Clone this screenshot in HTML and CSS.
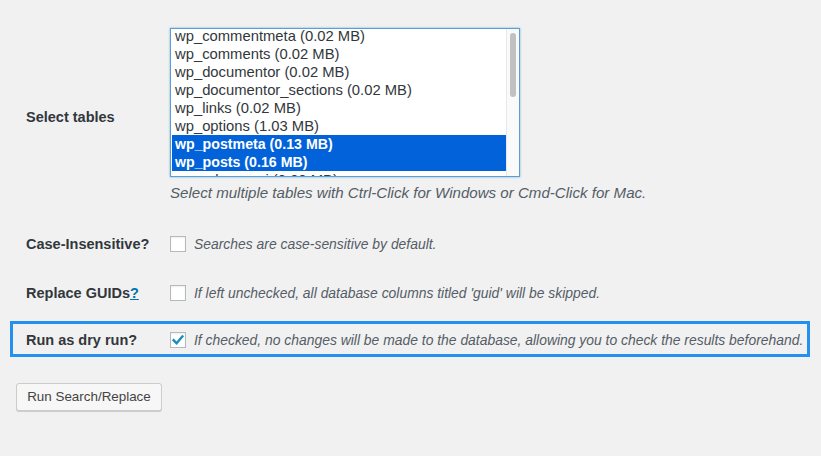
FILE: index.html
```html
<!DOCTYPE html>
<html>
<head>
<meta charset="utf-8">
<link rel="stylesheet" href="styles.css">
</head>
<body>
<div class="form">
  <div class="row row-tables">
    <div class="label">Select tables</div>
    <div class="field">
      <div class="listbox">
        <div class="options">
          <div class="opt">wp_commentmeta (0.02 MB)</div>
          <div class="opt">wp_comments (0.02 MB)</div>
          <div class="opt">wp_documentor (0.02 MB)</div>
          <div class="opt">wp_documentor_sections (0.02 MB)</div>
          <div class="opt">wp_links (0.02 MB)</div>
          <div class="opt">wp_options (1.03 MB)</div>
          <div class="opt sel">wp_postmeta (0.13 MB)</div>
          <div class="opt sel">wp_posts (0.16 MB)</div>
          <div class="opt">wp_relevanssi (0.00 MB)</div>
        </div>
        <div class="scrolltrack"><div class="thumb"></div></div>
      </div>
      <p class="desc desc-tables">Select multiple tables with Ctrl-Click for Windows or Cmd-Click for Mac.</p>
    </div>
  </div>

  <div class="row row-case">
    <div class="label">Case-Insensitive?</div>
    <div class="field check-field">
      <span class="checkbox"></span>
      <span class="desc">Searches are case-sensitive by default.</span>
    </div>
  </div>

  <div class="row row-guid">
    <div class="label">Replace GUIDs<a class="help" href="#">?</a></div>
    <div class="field check-field">
      <span class="checkbox"></span>
      <span class="desc">If left unchecked, all database columns titled 'guid' will be skipped.</span>
    </div>
  </div>

  <div class="row row-dry">
    <div class="label">Run as dry run?</div>
    <div class="field check-field">
      <span class="checkbox checked"><svg width="16" height="16" viewBox="0 0 16 16"><path d="M3.6 8.2 L6.6 11.3 L12.4 4.4" fill="none" stroke="#1e8cbe" stroke-width="2.4" stroke-linecap="square" stroke-linejoin="miter"/></svg></span>
      <span class="desc">If checked, no changes will be made to the database, allowing you to check the results beforehand.</span>
    </div>
  </div>

  <div class="actions">
    <button class="button">Run Search/Replace</button>
  </div>
</div>
</body>
</html>
```

FILE: styles.css
```css
html, body {
  margin: 0;
  padding: 0;
  background: #f1f1f1;
}
body {
  font-family: "Liberation Sans", Arial, sans-serif;
  color: #23282d;
  width: 821px;
  height: 456px;
  overflow: hidden;
}
.form {
  padding: 0 11px 0 10px;
}
.row {
  display: flex;
  align-items: center;
  padding-left: 16px;
}
.label {
  width: 144px;
  flex: none;
  font-weight: bold;
  font-size: 14.5px;
  color: #32373c;
}
.help {
  color: #0073aa;
  text-decoration: underline;
}
.row-tables {
  padding-top: 28px;
  padding-bottom: 15px;
}
.row-tables .label {
  padding-top: 3px;
}
.listbox {
  width: 350px;
  height: 149px;
  box-sizing: border-box;
  border: 1px solid #5b9dd9;
  box-shadow: 0 0 2px rgba(30, 140, 190, 0.6);
  background: #fff;
  display: flex;
  overflow: hidden;
}
.options {
  flex: 1;
  padding: 0 0 0 1px;
  margin-top: -2px;
}
.opt {
  height: 18px;
  line-height: 18px;
  padding-left: 3px;
  font-size: 14.8px;
  color: #32373c;
  white-space: nowrap;
}
.opt.sel {
  background: #0262d9;
  color: #fff;
  font-weight: bold;
  font-size: 14.2px;
}
.scrolltrack {
  width: 12px;
  flex: none;
  border-left: 1px solid #e8e8e8;
  background: #fafafa;
  position: relative;
}
.thumb {
  position: absolute;
  left: 3px;
  top: 4px;
  width: 6px;
  height: 64px;
  border-radius: 3px;
  background: #c1c1c1;
}
.desc {
  font-style: italic;
  font-size: 13.9px;
  color: #555d66;
}
.desc-tables {
  margin: 0;
  padding-top: 7px;
  line-height: 18px;
  font-size: 15.1px;
}
.check-field {
  display: flex;
  align-items: center;
}
.checkbox {
  width: 16px;
  height: 16px;
  box-sizing: border-box;
  border: 1px solid #b4b9be;
  background: #fff;
  box-shadow: inset 0 1px 2px rgba(0, 0, 0, 0.07);
  margin-right: 8px;
  flex: none;
  display: flex;
  align-items: center;
  justify-content: center;
}
.checkbox svg {
  display: block;
  margin: -1px;
}
.row-case {
  height: 54px;
}
.row-guid {
  height: 44px;
}
.row-dry {
  margin-top: 6px;
  height: 36px;
  box-sizing: border-box;
  border: 3px solid #2490f0;
  padding-left: 13px;
  padding-top: 2px;
}
.actions {
  padding: 26px 0 0 6px;
}
.button {
  font-family: "Liberation Sans", Arial, sans-serif;
  font-size: 13.4px;
  color: #444;
  background: #f7f7f7;
  border: 1px solid #cccccc;
  border-radius: 3px;
  box-shadow: 0 1px 0 #cccccc;
  height: 28px;
  width: 146px;
  padding: 0;
  line-height: 26px;
}
```
